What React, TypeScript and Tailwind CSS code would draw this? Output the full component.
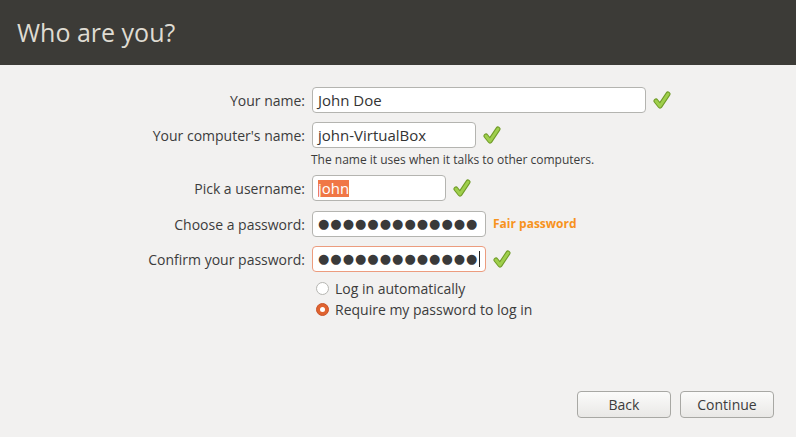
const ui = { fontFamily: '"Open Sans", "Noto Sans", sans-serif' };

function Check() {
  return (
    <svg width="18" height="18" viewBox="0 0 18 18" className="shrink-0">
      <path d="M3 10 L7 15 L15 3" fill="none" stroke="#6f9a26" strokeWidth="5" strokeLinecap="round" strokeLinejoin="round" />
      <path d="M3 10 L7 15 L15 3" fill="none" stroke="#9fcf4c" strokeWidth="3" strokeLinecap="round" strokeLinejoin="round" />
    </svg>
  );
}

function Field({ label, width, children, focus }: { label: string; width: string; children: React.ReactNode; focus?: boolean }) {
  return (
    <div className="flex items-center h-[26px]">
      <div className="w-[312px] pr-[7px] text-right text-[14px] text-[#3c3c3c]">{label}</div>
      <div
        className={`${width} h-[26px] rounded-[4px] border bg-white flex items-center px-[5px] overflow-hidden text-[15px] text-[#333] ${
          focus ? 'border-[#ec9c7e]' : 'border-[#b4b4b0]'
        }`}
      >
        {children}
      </div>
    </div>
  );
}

function Dots({ cursor }: { cursor?: boolean }) {
  return (
    <span className="flex items-center whitespace-nowrap">
      <span className="text-[13px] tracking-[1px] text-[#3a3a3a]" style={{ fontFamily: '"DejaVu Sans", sans-serif' }}>
        ●●●●●●●●●●●●●
      </span>
      {cursor && <span className="w-px h-[16px] bg-[#222] ml-[1px] shrink-0" />}
    </span>
  );
}

export default function App() {
  return (
    <div className="w-[796px] h-[437px] bg-[#f2f1f0] flex flex-col" style={ui}>
      <header className="h-[65px] bg-[#3c3b37] flex items-center px-[17px]">
        <h1 className="text-[25px] text-[#dfdbd2]">Who are you?</h1>
      </header>

      <main className="flex-1 flex flex-col pt-[22px]">
        {/* name */}
        <div className="flex items-center gap-[7px]">
          <Field label="Your name:" width="w-[334px]">John Doe</Field>
          <Check />
        </div>

        {/* computer name */}
        <div className="flex items-center gap-[7px] mt-[9px]">
          <Field label="Your computer's name:" width="w-[164px]">john-VirtualBox</Field>
          <Check />
        </div>
        <div className="pl-[311px] mt-[3px] text-[12px] text-[#3c3c3c] leading-[18px]">
          The name it uses when it talks to other computers.
        </div>

        {/* username */}
        <div className="flex items-center gap-[7px] mt-[6px]">
          <Field label="Pick a username:" width="w-[134px]">
            <span className="bg-[#f07746] text-white leading-[17px]">john</span>
          </Field>
          <Check />
        </div>

        {/* password */}
        <div className="flex items-center gap-[7px] mt-[10px]">
          <Field label="Choose a password:" width="w-[174px]">
            <Dots />
          </Field>
          <span className="text-[12px] font-bold text-[#f7931e]">Fair password</span>
        </div>

        {/* confirm */}
        <div className="flex items-center gap-[7px] mt-[9px]">
          <Field label="Confirm your password:" width="w-[174px]" focus>
            <Dots cursor />
          </Field>
          <Check />
        </div>

        {/* login options */}
        <div className="pl-[316px] mt-[8px] flex flex-col gap-[5px] text-[14px] text-[#3c3c3c]">
          <label className="flex items-center gap-[6px] h-[16px]">
            <span className="w-[13px] h-[13px] rounded-full border border-[#b6b6b2] bg-white" />
            Log in automatically
          </label>
          <label className="flex items-center gap-[6px] h-[16px]">
            <span className="w-[13px] h-[13px] rounded-full bg-[#e0632f] border border-[#c9542a] flex items-center justify-center">
              <span className="w-[5px] h-[5px] rounded-full bg-white" />
            </span>
            Require my password to log in
          </label>
        </div>

        <div className="mt-auto mb-[19px] flex justify-end gap-[9px] pr-[22px]">
          <button className="w-[94px] h-[27px] rounded-[4px] border border-[#a8a8a4] bg-gradient-to-b from-[#fbfbfa] to-[#e9e8e6] text-[14px] text-[#3c3c3c]">
            Back
          </button>
          <button className="w-[94px] h-[27px] rounded-[4px] border border-[#a8a8a4] bg-gradient-to-b from-[#fbfbfa] to-[#e9e8e6] text-[14px] text-[#3c3c3c]">
            Continue
          </button>
        </div>
      </main>
    </div>
  );
}
